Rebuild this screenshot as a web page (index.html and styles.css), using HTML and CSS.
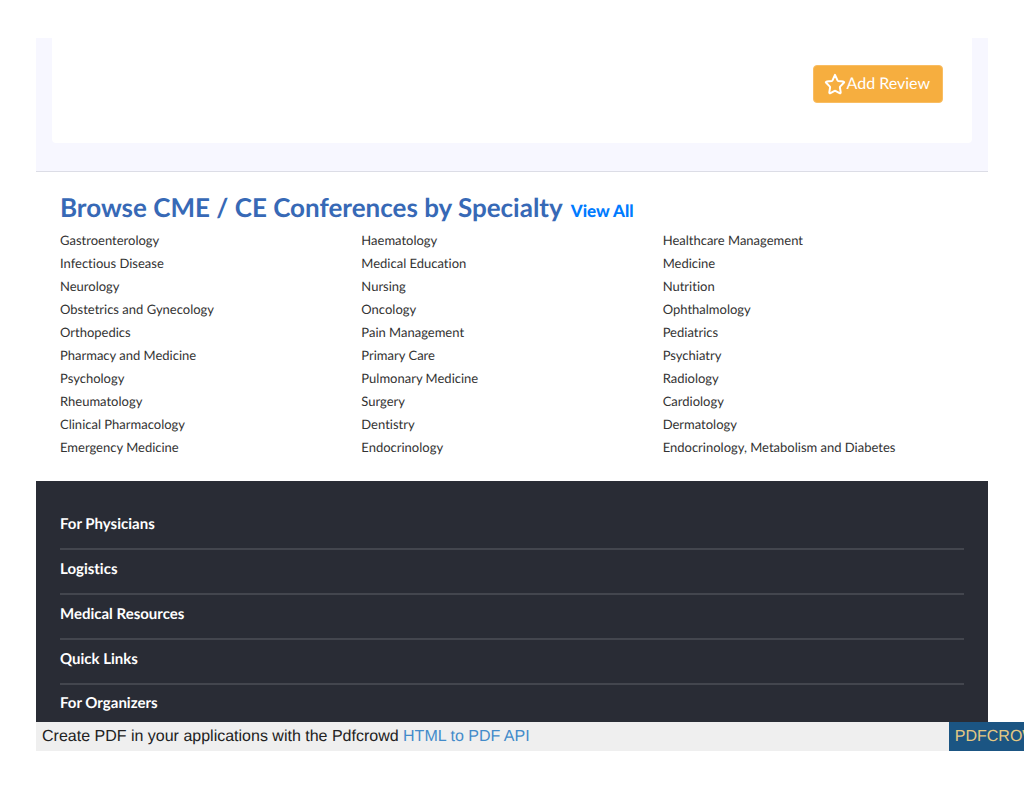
FILE: index.html
```html
<!DOCTYPE html>
<html lang="en">
<head>
<meta charset="utf-8">
<meta name="viewport" content="width=device-width, initial-scale=1">
<title>Browse CME / CE Conferences by Specialty</title>
<link rel="stylesheet" href="styles.css">
</head>
<body>
<main class="page">
  <section class="review-panel">
    <div class="review-card">
      <button type="button" class="review-button">
        <svg class="star" viewBox="0 0 22 22" aria-hidden="true"><path d="M11 1.9L13.5 7.4Q13.7 7.8 14.1 7.9L19.4 8.6Q20.7 8.9 19.8 9.8L16.1 13.6Q15.8 13.9 15.9 14.3L16.7 19.3Q16.8 20.7 15.5 20.1L11.4 17.8Q11 17.6 10.6 17.8L6.5 20.1Q5.2 20.7 5.3 19.3L6.1 14.3Q6.2 13.9 5.9 13.6L2.2 9.8Q1.3 8.9 2.6 8.6L7.9 7.9Q8.3 7.8 8.5 7.4Z"/></svg>
        <span>Add Review</span>
      </button>
    </div>
  </section>

  <section class="specialties">
    <div class="specialties-head">
      <h2 class="title">Browse CME / CE Conferences by Specialty</h2>
      <a class="view-all" href="#">View All</a>
    </div>
    <ul class="specialty-list">
      <li><a href="#">Gastroenterology</a></li>
      <li><a href="#">Haematology</a></li>
      <li><a href="#">Healthcare Management</a></li>
      <li><a href="#">Infectious Disease</a></li>
      <li><a href="#">Medical Education</a></li>
      <li><a href="#">Medicine</a></li>
      <li><a href="#">Neurology</a></li>
      <li><a href="#">Nursing</a></li>
      <li><a href="#">Nutrition</a></li>
      <li><a href="#">Obstetrics and Gynecology</a></li>
      <li><a href="#">Oncology</a></li>
      <li><a href="#">Ophthalmology</a></li>
      <li><a href="#">Orthopedics</a></li>
      <li><a href="#">Pain Management</a></li>
      <li><a href="#">Pediatrics</a></li>
      <li><a href="#">Pharmacy and Medicine</a></li>
      <li><a href="#">Primary Care</a></li>
      <li><a href="#">Psychiatry</a></li>
      <li><a href="#">Psychology</a></li>
      <li><a href="#">Pulmonary Medicine</a></li>
      <li><a href="#">Radiology</a></li>
      <li><a href="#">Rheumatology</a></li>
      <li><a href="#">Surgery</a></li>
      <li><a href="#">Cardiology</a></li>
      <li><a href="#">Clinical Pharmacology</a></li>
      <li><a href="#">Dentistry</a></li>
      <li><a href="#">Dermatology</a></li>
      <li><a href="#">Emergency Medicine</a></li>
      <li><a href="#">Endocrinology</a></li>
      <li><a href="#">Endocrinology, Metabolism and Diabetes</a></li>
    </ul>
  </section>

  <footer class="site-footer">
    <h3 class="footer-heading">For Physicians</h3>
    <h3 class="footer-heading">Logistics</h3>
    <h3 class="footer-heading">Medical Resources</h3>
    <h3 class="footer-heading">Quick Links</h3>
    <h3 class="footer-heading">For Organizers</h3>
  </footer>
</main>

<aside class="pdf-bar">
  <p class="pdf-note">Create PDF in your applications with the Pdfcrowd <a href="#">HTML to PDF API</a></p>
  <a class="pdf-brand" href="#">PDFCROWD</a>
</aside>
</body>
</html>
```

FILE: styles.css
```css
* {
  box-sizing: border-box;
}

body {
  margin: 0;
  padding: 38px 0 40px 36px;
  overflow-x: hidden;
  background: #fff;
  color: #333;
  font-family: Lato, sans-serif;
  font-variant-ligatures: none;
  text-rendering: geometricPrecision;
}

h2,
h3,
p,
ul {
  margin: 0;
  padding: 0;
}

a {
  text-decoration: none;
}

.page {
  margin-right: 36px;
}

/* Review card */
.review-panel {
  padding: 0 16px 28px;
  background: #f7f7ff;
  border-bottom: 1px solid #dcdde6;
}

.review-card {
  display: flex;
  justify-content: flex-end;
  padding: 27px 29px 40px;
  background: #fff;
  border-radius: 0 0 4px 4px;
}

.review-button {
  display: flex;
  align-items: center;
  gap: 1px;
  height: 38px;
  padding: 0 12px 0 10px;
  background: #f6ae3f;
  border: 1px solid #f9bd62;
  border-radius: 4px;
  color: #fff;
  font: 400 16px/24px Lato, sans-serif;
  text-rendering: inherit;
}

.star {
  width: 22px;
  height: 22px;
  fill: none;
  stroke: #fff;
  stroke-width: 2;
  stroke-linejoin: round;
}

/* Specialty directory */
.specialties {
  padding: 18px 24px 22px;
}

.specialties-head {
  display: flex;
  align-items: baseline;
  gap: 8px;
}

.title {
  color: #3769b6;
  font-size: 26px;
  font-weight: 700;
  line-height: 34px;
}

.view-all {
  color: #007bff;
  font-size: 17px;
  font-weight: 900;
}

.specialty-list {
  display: grid;
  grid-template-columns: repeat(3, 1fr);
  padding-top: 5px;
  list-style: none;
  font-size: 13px;
  line-height: 23px;
}

.specialty-list a {
  color: #333;
}

/* Footer */
.site-footer {
  padding: 24px 24px 0;
  background: #292c35;
}

.footer-heading {
  padding: 12px 0 16px;
  border-bottom: 2px solid #43464e;
  color: #fff;
  font-size: 15px;
  font-weight: 700;
  line-height: 15px;
}

.footer-heading:last-child {
  padding: 11px 0;
  border-bottom: 0;
}

/* PDF service bar */
.pdf-bar {
  display: flex;
  align-items: stretch;
  background: #efefef;
  color: #222;
  font: 16px/29px "Liberation Sans", Arial, sans-serif;
}

.pdf-note {
  flex: 1;
  padding-left: 6px;
}

.pdf-note a {
  color: #428bca;
}

.pdf-brand {
  flex: none;
  margin-right: -31px;
  padding: 0 6px;
  background: #1b5583;
  color: #e4c883;
}
```
